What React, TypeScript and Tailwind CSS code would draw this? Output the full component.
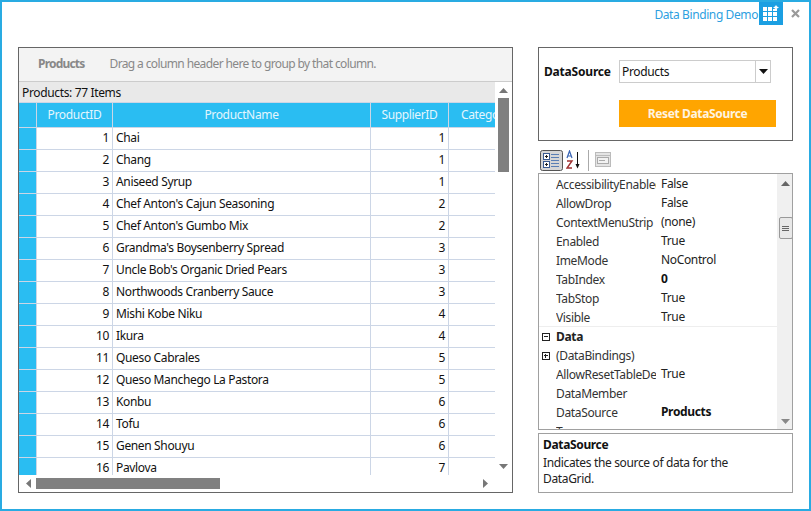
const products: [number, string, number][] = [
  [1, "Chai", 1],
  [2, "Chang", 1],
  [3, "Aniseed Syrup", 1],
  [4, "Chef Anton's Cajun Seasoning", 2],
  [5, "Chef Anton's Gumbo Mix", 2],
  [6, "Grandma's Boysenberry Spread", 3],
  [7, "Uncle Bob's Organic Dried Pears", 3],
  [8, "Northwoods Cranberry Sauce", 3],
  [9, "Mishi Kobe Niku", 4],
  [10, "Ikura", 4],
  [11, "Queso Cabrales", 5],
  [12, "Queso Manchego La Pastora", 5],
  [13, "Konbu", 6],
  [14, "Tofu", 6],
  [15, "Genen Shouyu", 6],
  [16, "Pavlova", 7],
];

const props1: [string, string, boolean?][] = [
  ["AccessibilityEnabled", "False"],
  ["AllowDrop", "False"],
  ["ContextMenuStrip", "(none)"],
  ["Enabled", "True"],
  ["ImeMode", "NoControl"],
  ["TabIndex", "0", true],
  ["TabStop", "True"],
  ["Visible", "True"],
];

const props2: [string, string, boolean?][] = [
  ["AllowResetTableDefaults", "True"],
  ["DataMember", ""],
  ["DataSource", "Products", true],
  ["Tag", ""],
];

function Tri({ dir, color = "#777" }: { dir: "up" | "down" | "left" | "right"; color?: string }) {
  const pts = {
    up: "0,5 4.5,0 9,5",
    down: "0,0 9,0 4.5,5",
    left: "5,0 5,9 0,4.5",
    right: "0,0 0,9 5,4.5",
  }[dir];
  const vertical = dir === "up" || dir === "down";
  return (
    <svg width={vertical ? 9 : 5} height={vertical ? 5 : 9} className="block">
      <polygon points={pts} fill={color} />
    </svg>
  );
}

function Box({ plus }: { plus?: boolean }) {
  return (
    <svg width="8" height="8" className="block shrink-0">
      <rect x="0.5" y="0.5" width="7" height="7" fill="none" stroke="#222" />
      <path d="M2 3.500H6" stroke="#222" />
      {plus && <path d="M3.500 2V6" stroke="#222" />}
    </svg>
  );
}

function PropRow({ row }: { row: [string, string, boolean?] }) {
  return (
    <div className="flex h-[19px] items-center pt-px">
      <div className="ml-[17px] w-[100px] shrink-0 overflow-hidden whitespace-nowrap text-[#333]">{row[0]}</div>
      <div className={`ml-[5px] -mt-[2px] whitespace-nowrap ${row[2] ? "font-bold text-[#111]" : "text-[#222]"}`}>{row[1]}</div>
    </div>
  );
}

export default function App() {
  return (
    <div className="relative flex h-[511px] w-[811px] flex-col overflow-hidden border-2 border-[#29abe2] bg-white font-['Noto_Sans',sans-serif] text-[12px] leading-[16px] tracking-[-0.35px] text-[#111]">
      <div className="flex h-[45px] shrink-0 items-start justify-end">
        <span className="mt-[5px] mr-px text-[12px] tracking-[-0.4px] text-[#2e9fdf]">Data Binding Demo</span>
        <div className="-mt-[2px] h-[25px] w-[24px] bg-[#1b9fe2]">
          <svg width="24" height="25" viewBox="0 0 24 25" className="block">
            <g fill="#fff">
              <rect x="4" y="7" width="4" height="4" />
              <rect x="9" y="7" width="4" height="4" />
              <rect x="14" y="9" width="4" height="2" />
              <rect x="4" y="12" width="4" height="4" />
              <rect x="9" y="12" width="4" height="4" />
              <rect x="14" y="12" width="4" height="4" />
              <rect x="4" y="17" width="4" height="4" />
              <rect x="9" y="17" width="4" height="4" />
              <rect x="14" y="17" width="4" height="4" />
              <polygon points="17,5 18,6.500 20,7.500 18,8.500 17,10 16,8.500 14,7.500 16,6.500" />
            </g>
          </svg>
        </div>
        <svg width="9" height="9" viewBox="0 0 9 9" className="mt-[7px] ml-[8px]">
          <path d="M1 1L8 8M8 1L1 8" stroke="#9a9a9a" strokeWidth="2.2" />
        </svg>
        <div className="w-[9px]" />
      </div>

      <div className="flex gap-[25px] pl-[16px]">
        {/* Grid */}
        <div className="flex h-[446px] w-[495px] flex-col border border-[#666]">
          <div className="flex h-[34px] shrink-0 items-center border-b border-[#ccc] bg-[#f3f3f3] pb-px pl-[19px] text-[#888]">
            <span className="font-bold tracking-[-0.8px]">Products</span>
            <span className="ml-[25px] tracking-[-0.62px]">Drag a column header here to group by that column.</span>
          </div>
          <div className="flex h-[393px] shrink-0">
            <div className="flex w-[476px] flex-col overflow-hidden">
              <div className="flex h-[20px] shrink-0 items-center bg-[#e9e9e9] pt-px pl-[3px]">Products: 77 Items</div>
              <div className="flex h-[26px] shrink-0 border-y border-[#ccd6e6] bg-[#2abdf2] text-[#e4f6fd]">
                <div className="w-[18px] shrink-0 border-r border-[#ccd6e6]" />
                <div className="flex w-[76px] shrink-0 items-center justify-center border-r border-[#ccd6e6]">ProductID</div>
                <div className="flex w-[258px] shrink-0 items-center justify-center border-r border-[#ccd6e6]">ProductName</div>
                <div className="flex w-[78px] shrink-0 items-center justify-center border-r border-[#ccd6e6]">SupplierID</div>
                <div className="flex w-[78px] shrink-0 items-center pl-[12px] whitespace-nowrap">CategoryID</div>
              </div>
              {products.map(([id, name, sup]) => (
                <div key={id} className="flex h-[22px] shrink-0 border-b border-[#ccd6e6]">
                  <div className="w-[18px] shrink-0 border-r border-[#ccd6e6] bg-[#2abdf2]" />
                  <div className="flex w-[76px] shrink-0 items-center justify-end border-r border-[#ccd6e6] pr-[3px] pb-[2px]">{id}</div>
                  <div className="flex w-[258px] shrink-0 items-center border-r border-[#ccd6e6] pb-[2px] pl-[3px]">{name}</div>
                  <div className="flex w-[78px] shrink-0 items-center justify-end border-r border-[#ccd6e6] pr-[3px] pb-[2px]">{sup}</div>
                  <div className="w-[78px] shrink-0" />
                </div>
              ))}
            </div>
            <div className="flex w-[17px] shrink-0 flex-col items-center pt-[6px]">
              <Tri dir="up" />
              <div className="mt-[5px] h-[74px] w-[11px] bg-[#808080]" />
              <div className="flex-1" />
              <div className="mb-[6px]"><Tri dir="down" /></div>
            </div>
          </div>
          <div className="flex h-[17px] shrink-0 items-center">
            <div className="ml-[7px]"><Tri dir="left" /></div>
            <div className="ml-[5px] h-[11px] w-[184px] bg-[#808080]" />
            <div className="ml-[263px]"><Tri dir="right" /></div>
          </div>
        </div>

        {/* Right */}
        <div className="flex w-[255px] flex-col">
          <div className="h-[94px] border border-[#666] pt-[12px] pl-[80px]">
            <div className="relative flex h-[23px] w-[152px] items-center justify-between border border-[#ccc] pl-[2px]">
              <span className="absolute left-[-76px] font-bold tracking-[-0.2px]">DataSource</span>
              <span>Products</span>
              <div className="flex h-full w-[15px] items-center justify-center border-l border-[#ccc]">
                <Tri dir="down" color="#111" />
              </div>
            </div>
            <div className="mt-[17px] flex h-[27px] w-[157px] items-center justify-center bg-[#ffa500] pt-px font-bold text-[#fff4e0]">Reset DataSource</div>
          </div>

          <div className="mt-[7px] flex h-[25px] items-start pt-[2px] pl-[2px]">
            <svg width="23" height="21" viewBox="0 0 23 21" className="block">
              <rect x="0.5" y="0.5" width="22" height="20" rx="2" fill="#d6d6d6" stroke="#555" />
              <rect x="3.500" y="3.500" width="6" height="6" fill="#fff" stroke="#3a5a90" />
              <rect x="3.500" y="11.500" width="6" height="6" fill="#fff" stroke="#3a5a90" />
              <path d="M5 6.500H8M6.500 5V8M5 14.500H8M6.500 13V16" stroke="#222" />
              <path d="M11 4.500H19M11 7.500H19M11 10.500H19M11 13.500H19M11 16.500H19" stroke="#5a7fb5" />
            </svg>
            <svg width="16" height="20" viewBox="0 0 16 20" className="ml-[3px] block">
              <path d="M1 8L3.500 1L6 8M2 6H5" fill="none" stroke="#3b66b5" strokeWidth="1.2" />
              <path d="M1 11H6L1 18H6" fill="none" stroke="#a03030" strokeWidth="1.4" />
              <path d="M11.500 2V16" stroke="#111" />
              <path d="M9.500 14L11.500 18.500L13.500 14Z" fill="#111" />
            </svg>
            <div className="ml-[6px] h-[21px] w-px bg-[#aaa]" />
            <svg width="16" height="15" viewBox="0 0 16 15" className="mt-[2px] ml-[6px] block">
              <rect x="0.5" y="0.5" width="15" height="14" fill="#e4e4e4" stroke="#bbb" />
              <path d="M0.5 3.500H15.500" stroke="#bbb" />
              <rect x="2.500" y="5.500" width="11" height="6" fill="#f2f2f2" stroke="#aaa" />
              <path d="M4 8.500H10" stroke="#aaa" />
            </svg>
          </div>

          <div className="flex h-[257px] overflow-hidden border border-[#a0a0a0]">
            <div className="w-[238px] shrink-0 overflow-hidden pt-[1px]">
              {props1.map((r) => <PropRow key={r[0]} row={r} />)}
              <div className="-mt-px flex h-[21px] items-center border-t border-[#eee] pl-[3px] font-bold text-[#222]">
                <Box />
                <span className="ml-[6px]">Data</span>
              </div>
              <div className="flex h-[18px] items-center pl-[3px] text-[#333]">
                <Box plus />
                <span className="ml-[6px]">(DataBindings)</span>
              </div>
              {props2.map((r) => <PropRow key={r[0]} row={r} />)}
            </div>
            <div className="flex w-[17px] shrink-0 flex-col items-center bg-[#f0f0f0] pt-[7px] pb-[5px]">
              <Tri dir="up" color="#666" />
              <div className="mt-[31px] flex h-[22px] w-[14px] flex-col items-center justify-center gap-px rounded-[2px] border border-[#999] bg-[#e8e8e8]">
                <div className="h-px w-[7px] bg-[#666]" />
                <div className="h-px w-[7px] bg-[#666]" />
                <div className="h-px w-[7px] bg-[#666]" />
              </div>
              <div className="flex-1" />
              <Tri dir="down" color="#888" />
            </div>
          </div>

          <div className="mt-[3px] h-[60px] border border-[#a0a0a0] pt-[3px] pl-[4px] text-[#222]">
            <div className="font-bold text-[#111]">DataSource</div>
            <div className="mt-[2px] w-[210px]">Indicates the source of data for the DataGrid.</div>
          </div>
        </div>
      </div>
    </div>
  );
}
